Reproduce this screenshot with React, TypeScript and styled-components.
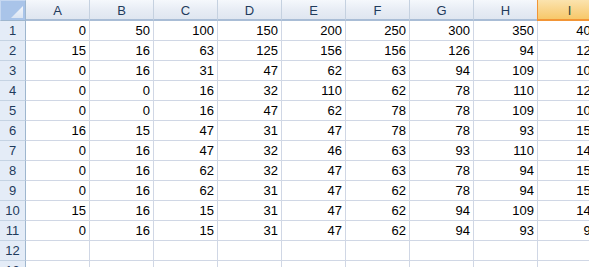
import styled, { createGlobalStyle } from 'styled-components';

const GlobalStyle = createGlobalStyle`
  * { box-sizing: border-box; }
  body {
    margin: 0;
    background: #ffffff;
    font-family: "Liberation Sans", Arial, sans-serif;
    overflow: hidden;
  }
`;

const columns = ['A', 'B', 'C', 'D', 'E', 'F', 'G', 'H', 'I'];
const selectedColumn = 'I';

const data: (number | null)[][] = [
  [0, 50, 100, 150, 200, 250, 300, 350, 400],
  [15, 16, 63, 125, 156, 156, 126, 94, 125],
  [0, 16, 31, 47, 62, 63, 94, 109, 109],
  [0, 0, 16, 32, 110, 62, 78, 110, 125],
  [0, 0, 16, 47, 62, 78, 78, 109, 109],
  [16, 15, 47, 31, 47, 78, 78, 93, 156],
  [0, 16, 47, 32, 46, 63, 93, 110, 140],
  [0, 16, 62, 32, 47, 63, 78, 94, 156],
  [0, 16, 62, 31, 47, 62, 78, 94, 156],
  [15, 16, 15, 31, 47, 62, 94, 109, 140],
  [0, 16, 15, 31, 47, 62, 94, 93, 94],
  [null, null, null, null, null, null, null, null, null],
  [null, null, null, null, null, null, null, null, null],
];

const App = () => {
  return (
    <>
      <GlobalStyle />
      <Viewport>
        <Sheet>
          <Corner>
            <CornerTriangle />
          </Corner>
          {columns.map((c) => (
            <ColHeader key={c} $selected={c === selectedColumn}>
              {c}
            </ColHeader>
          ))}
          {data.map((row, r) => (
            <Row key={r}>
              <RowHeader>{r + 1}</RowHeader>
              {row.map((v, i) => (
                <Cell key={i}>{v === null ? '' : v}</Cell>
              ))}
            </Row>
          ))}
        </Sheet>
      </Viewport>
    </>
  );
};

export default App;

const Viewport = styled.div`
  width: 589px;
  height: 267px;
  overflow: hidden;
`;

const Sheet = styled.div`
  display: grid;
  grid-template-columns: 26px repeat(9, 64px);
  grid-template-rows: 21px repeat(13, 20px);
  width: max-content;
`;

const Row = styled.div`
  display: contents;
`;

const Corner = styled.div`
  position: relative;
  background: #a9c4e9;
  border: 1px solid #c6d8f1;
  border-right-color: #9eb6ce;
  border-bottom-color: #9eb6ce;
`;

const CornerTriangle = styled.div`
  position: absolute;
  right: 2px;
  bottom: 2px;
  width: 12px;
  height: 12px;
  background: linear-gradient(to bottom, #f3f6fb, #dbe5f3);
  clip-path: polygon(100% 0, 100% 100%, 0 100%);
`;

const ColHeader = styled.div<{ $selected?: boolean }>`
  display: flex;
  align-items: center;
  justify-content: center;
  padding-top: 1px;
  font-size: 13px;
  color: ${(p) => (p.$selected ? '#2c4a3e' : '#1f3b5c')};
  background: ${(p) =>
    p.$selected
      ? 'linear-gradient(to bottom, #fbe3ae 0%, #f9d58c 50%, #f7c86a 100%)'
      : 'linear-gradient(to bottom, #f5f8fc 0%, #e8edf5 50%, #dfe6f0 100%)'};
  border-right: 1px solid ${(p) => (p.$selected ? '#f29536' : '#c5d1e0')};
  border-left: ${(p) => (p.$selected ? '1px solid #f29536' : 'none')};
  margin-left: ${(p) => (p.$selected ? '-1px' : '0')};
  border-bottom: 2px solid ${(p) => (p.$selected ? '#f29536' : '#a9bdd6')};
`;

const RowHeader = styled.div`
  display: flex;
  align-items: center;
  justify-content: center;
  font-size: 13px;
  color: #1f3b5c;
  background: #e4ecf7;
  border-right: 1px solid #9eb6ce;
  border-bottom: 1px solid #c5d3e3;
`;

const Cell = styled.div`
  display: flex;
  align-items: center;
  justify-content: flex-end;
  padding-right: 3px;
  font-size: 13px;
  color: #000000;
  border-right: 1px solid #d0d7e5;
  border-bottom: 1px solid #d0d7e5;
  white-space: nowrap;
`;
